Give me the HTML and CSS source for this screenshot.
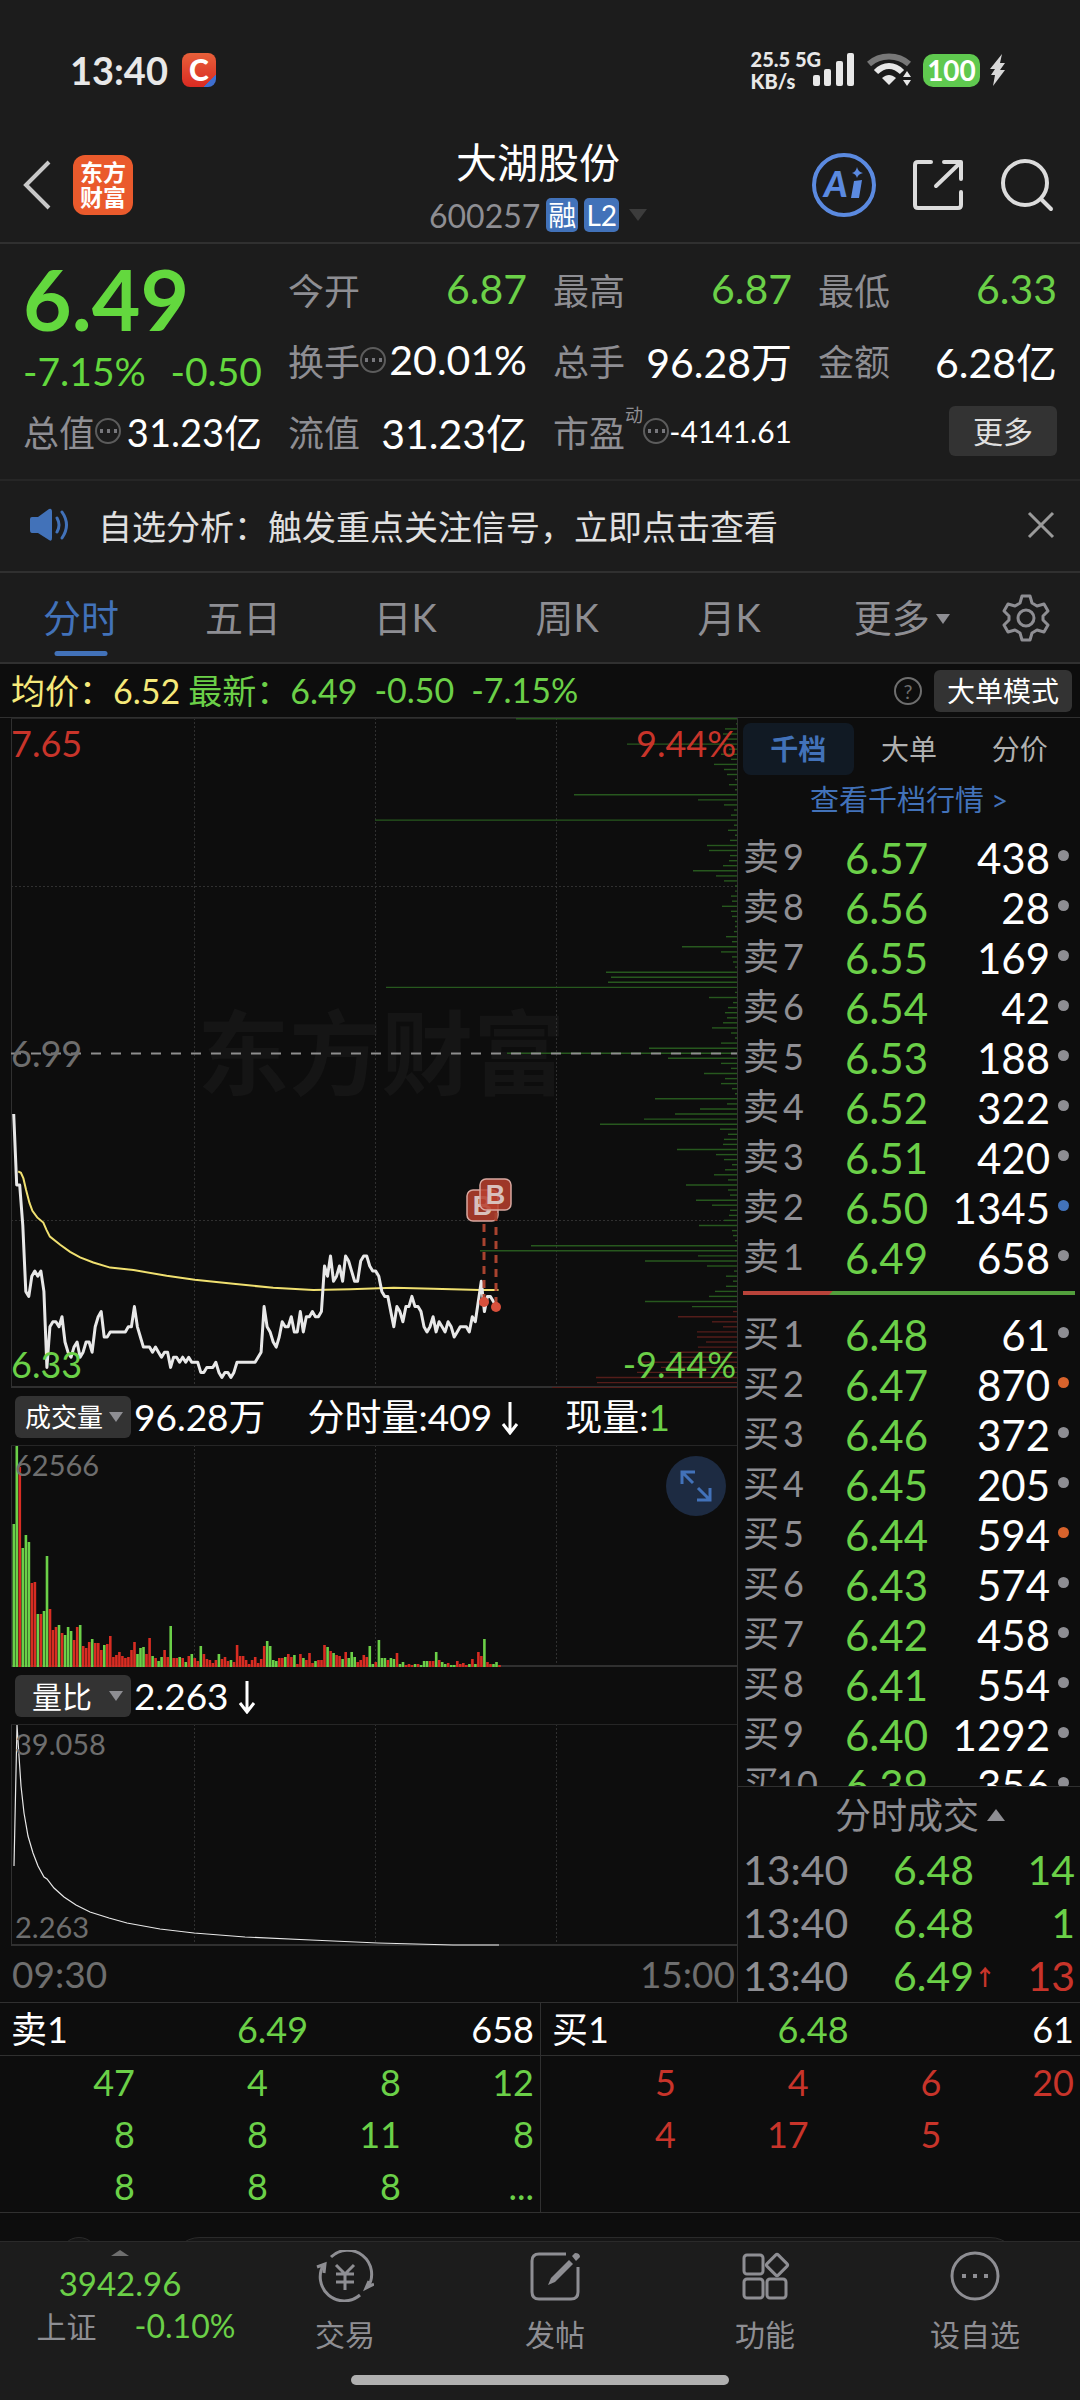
FILE: index.html
```html
<!DOCTYPE html>
<html lang="zh-CN">

<head>
  <meta charset="UTF-8" />
  <meta name="viewport" content="width=device-width, initial-scale=1.0" />
  <title>大湖股份 600257</title>
  <link rel="stylesheet" href="styles.css">
</head>

<body>
  <!-- Status bar -->
  <div class="status-bar">
    <span class="clock">13:40</span>
    <span class="app-badge">C</span>
    <div class="status-right">
      <div class="net-speed">25.5 5G<br>KB/s</div>
      <svg class="signal" width="42" height="34" viewBox="0 0 42 34" fill="#e8e8e8">
        <rect x="0" y="22" width="7" height="11" rx="2" />
        <rect x="11" y="16" width="7" height="17" rx="2" />
        <rect x="23" y="8" width="7" height="25" rx="2" />
        <rect x="34" y="0" width="7" height="33" rx="2" />
      </svg>
      <svg class="wifi" width="46" height="34" viewBox="0 0 46 34" fill="none">
        <path d="M2 11 C13 1 31 1 42 11" stroke="#777" stroke-width="6" />
        <path d="M9 19 C17 11 27 11 35 19" stroke="#e8e8e8" stroke-width="6" />
        <path d="M15 25 C20 21 24 21 29 25 L22 32 Z" fill="#e8e8e8" />
        <path d="M36 24 L40 18 L44 24 Z M36 27 L40 33 L44 27 Z" fill="#e8e8e8" />
      </svg>
      <span class="battery">100</span>
      <svg class="bolt" width="16" height="32" viewBox="0 0 16 32" fill="#d8d8d8">
        <path d="M12 0 L0 15 H5 L1 21 H5 L3 32 L15 16 H10 L15 9 H10 Z" />
      </svg>
    </div>
  </div>

  <!-- Header -->
  <header class="header">
    <div class="header-left">
      <a href="#" class="back" aria-label="返回">
        <svg width="30" height="50" viewBox="0 0 30 50" fill="none" stroke="#c8c8c8" stroke-width="4">
          <path d="M27 2 L4 25 L27 48" />
        </svg>
      </a>
      <span class="logo">东方<br>财富</span>
    </div>
    <div class="stock">
      <h1>大湖股份</h1>
      <div class="stock-code">
        <span>600257</span>
        <span class="tag">融</span>
        <span class="tag">L2</span>
        <span class="tri-down"></span>
      </div>
    </div>
    <div class="header-right">
      <button aria-label="AI">
        <svg width="64" height="64" viewBox="0 0 64 64">
          <circle cx="32" cy="32" r="30" fill="none" stroke="#5b8ae0" stroke-width="4" />
          <text class="ai-text" x="12" y="44">A</text>
          <path d="M42 28 L50 27 L47 45 L39 45 Z M45 14 Q46 19 51 20 Q46 21 45 25 Q44 21 40 20 Q44 19 45 14 Z" fill="#5b8ae0" />
        </svg>
      </button>
      <button aria-label="分享">
        <svg width="52" height="52" viewBox="0 0 52 52" fill="none" stroke="#dcdcdc" stroke-width="4" stroke-linecap="round" stroke-linejoin="round">
          <path d="M19 3 H6 Q3 3 3 6 V46 Q3 49 6 49 H46 Q49 49 49 46 V33" />
          <path d="M32 3 H49 V20 M48 4 L24 27" />
        </svg>
      </button>
      <button aria-label="搜索">
        <svg width="54" height="54" viewBox="0 0 54 54" fill="none" stroke="#dcdcdc" stroke-width="4" stroke-linecap="round">
          <circle cx="25" cy="25" r="22" />
          <path d="M41 41 L51 51" />
        </svg>
      </button>
    </div>
  </header>

  <!-- Quote summary -->
  <section class="quote">
    <div class="quote-main">
      <div class="last-price">6.49</div>
      <div class="last-change"><span>-7.15%</span><span>-0.50</span></div>
    </div>
    <div class="cell"><span class="label">今开</span><span class="value green">6.87</span></div>
    <div class="cell"><span class="label">最高</span><span class="value green">6.87</span></div>
    <div class="cell"><span class="label">最低</span><span class="value green">6.33</span></div>
    <div class="cell"><span class="label">换手<i class="dots"></i></span><span class="value">20.01%</span></div>
    <div class="cell"><span class="label">总手</span><span class="value">96.28万</span></div>
    <div class="cell"><span class="label">金额</span><span class="value">6.28亿</span></div>
    <div class="cell"><span class="label">总值<i class="dots"></i></span><span class="value mid">31.23亿</span></div>
    <div class="cell"><span class="label">流值</span><span class="value">31.23亿</span></div>
    <div class="cell"><span class="label">市盈<sup>动</sup><i class="dots"></i></span><span class="value small">-4141.61</span></div>
    <div class="cell end"><button class="more-btn">更多</button></div>
  </section>

  <!-- Notice -->
  <div class="notice">
    <svg width="40" height="34" viewBox="0 0 40 34" fill="#4272b9">
      <path d="M0 11 Q0 9 2 9 H8 L19 1 Q22 0 22 4 V30 Q22 34 19 32 L8 25 H2 Q0 25 0 22 Z" />
      <path d="M27 10 Q31 17 27 24 M32 4 Q41 17 32 30" fill="none" stroke="#4272b9" stroke-width="3" stroke-linecap="round" />
    </svg>
    <a href="#">自选分析：触发重点关注信号，立即点击查看</a>
    <button aria-label="关闭">
      <svg width="28" height="28" viewBox="0 0 28 28" stroke="#9a9a9a" stroke-width="3">
        <path d="M2 2 L26 26 M26 2 L2 26" />
      </svg>
    </button>
  </div>

  <!-- Period tabs -->
  <nav class="tabs">
    <button class="active">分时</button>
    <button>五日</button>
    <button>日K</button>
    <button>周K</button>
    <button>月K</button>
    <button>更多<span class="tri-down small"></span></button>
    <button class="gear" aria-label="设置">
      <svg width="48" height="48" viewBox="0 0 48 48" fill="none" stroke="#8e8e93" stroke-width="3" stroke-linejoin="round">
        <path d="M20 2 H28 L30 9 L35 12 L42 10 L46 17 L41 22 V26 L46 31 L42 38 L35 36 L30 39 L28 46 H20 L18 39 L13 36 L6 38 L2 31 L7 26 V22 L2 17 L6 10 L13 12 L18 9 Z" />
        <circle cx="24" cy="24" r="8" />
      </svg>
    </button>
  </nav>

  <!-- Average / latest line -->
  <div class="info-line">
    <span class="yellow">均价：6.52</span>
    <span class="green">最新：6.49</span>
    <span class="green">-0.50</span>
    <span class="green">-7.15%</span>
    <span class="help">?</span>
    <button class="mode-btn">大单模式</button>
  </div>

  <main class="board">
    <!-- Charts -->
    <div class="charts">
      <div class="pane">
        <span class="watermark">东方财富</span>
        <svg id="price-chart" viewBox="0 0 726 670"></svg>
        <span class="axis high left red">7.65</span>
        <span class="axis high right red">9.44%</span>
        <span class="axis middle left gray">6.99</span>
        <span class="axis low left green">6.33</span>
        <span class="axis low right green">-9.44%</span>
      </div>

      <div class="indicator">
        <button class="pick">成交量<span class="tri-down small"></span></button>
        <span class="total">96.28万</span>
        <span class="minute">分时量:409<svg class="arrow" width="18" height="34" viewBox="0 0 18 34"><path d="M9 1 V32 M2 23 L9 32 L16 23" /></svg></span>
        <span>现量:<b class="green">1</b></span>
      </div>
      <div class="pane">
        <svg id="volume-chart" viewBox="0 0 726 222"></svg>
        <span class="axis small high left gray">62566</span>
        <button class="expand" aria-label="全屏">
          <svg width="32" height="32" viewBox="0 0 32 32" fill="none" stroke="#4272b9" stroke-width="3">
            <path d="M2 14 V2 H15 M3 3 L13 13 M30 18 V30 H17 M29 29 L18 18" />
          </svg>
        </button>
      </div>

      <div class="indicator">
        <button class="pick wide">量比<span class="tri-down small"></span></button>
        <span>2.263<svg class="arrow" width="18" height="34" viewBox="0 0 18 34"><path d="M9 1 V32 M2 23 L9 32 L16 23" /></svg></span>
      </div>
      <div class="pane">
        <svg id="ratio-chart" viewBox="0 0 726 222"></svg>
        <span class="axis small high left gray">39.058</span>
        <span class="axis small low left gray">2.263</span>
      </div>
      <div class="time-axis"><span>09:30</span><span>15:00</span></div>
    </div>

    <!-- Order book -->
    <aside class="side">
      <div class="side-tabs">
        <button class="active">千档</button>
        <button>大单</button>
        <button>分价</button>
      </div>
      <a href="#" class="depth-link">查看千档行情 &gt;</a>
      <div class="book">
        <table id="asks"></table>
        <div class="ratio-bar"><span></span></div>
        <table id="bids"></table>
      </div>
      <div class="deals">
        <button class="deals-title">分时成交<span class="tri-up"></span></button>
        <table>
          <tr><td>13:40</td><td class="green">6.48</td><td class="green">14</td></tr>
          <tr><td>13:40</td><td class="green">6.48</td><td class="green">1</td></tr>
          <tr><td>13:40</td><td class="green">6.49<i class="up">↑</i></td><td class="red">13</td></tr>
        </table>
      </div>
    </aside>
  </main>

  <!-- Queue at best ask / bid -->
  <section class="queues">
    <div class="queue">
      <div class="queue-head"><span>卖1</span><span class="green">6.49</span><span>658</span></div>
      <table class="green">
        <tr><td>47</td><td>4</td><td>8</td><td>12</td></tr>
        <tr><td>8</td><td>8</td><td>11</td><td>8</td></tr>
        <tr><td>8</td><td>8</td><td>8</td><td>...</td></tr>
      </table>
    </div>
    <div class="queue">
      <div class="queue-head"><span>买1</span><span class="green">6.48</span><span>61</span></div>
      <table class="red">
        <tr><td>5</td><td>4</td><td>6</td><td>20</td></tr>
        <tr><td>4</td><td>17</td><td>5</td><td></td></tr>
      </table>
    </div>
  </section>

  <div class="peek">
    <span class="peek-avatar"></span>
    <span class="peek-box"></span>
  </div>

  <!-- Bottom bar -->
  <footer class="footer">
    <nav class="bottom-nav">
      <a href="#" class="index">
        <span class="tri-up dim"></span>
        <span class="index-value">3942.96</span>
        <span class="index-row"><span>上证</span><span class="green">-0.10%</span></span>
      </a>
      <a href="#">
        <svg width="58" height="52" viewBox="0 0 58 52" fill="none" stroke="#8e8e93" stroke-width="3">
          <path d="M15 7 A24 24 0 0 1 52 37 M44 45 A24 24 0 0 1 8 14 M1 17 L9 14 L8 23 M58 34 L50 38 L53 31" />
          <path d="M20 15 L29 24 L38 15 M29 24 V40 M20 24 H38 M20 32 H38" />
        </svg>
        交易
      </a>
      <a href="#">
        <svg width="50" height="52" viewBox="0 0 50 52" fill="none" stroke="#8e8e93" stroke-width="3">
          <path d="M36 4 H9 Q2 4 2 11 V42 Q2 49 9 49 H41 Q48 49 48 42 V17" />
          <path d="M39 10 L43 14 L25 32 L18 35 L21 28 Z M42 6 L45 3 Q50 3 50 7 L46 11 Z" fill="#8e8e93" stroke="none" />
        </svg>
        发帖
      </a>
      <a href="#">
        <svg width="50" height="52" viewBox="0 0 50 52" fill="none" stroke="#8e8e93" stroke-width="3">
          <rect x="4" y="5" width="19" height="19" rx="3" />
          <rect x="4" y="29" width="19" height="19" rx="3" />
          <rect x="27" y="29" width="19" height="19" rx="3" />
          <rect x="-8" y="-8" width="16" height="16" rx="2" transform="translate(37 15) rotate(45)" />
        </svg>
        功能
      </a>
      <a href="#">
        <svg width="50" height="52" viewBox="0 0 50 52" fill="none" stroke="#8e8e93" stroke-width="3">
          <circle cx="25" cy="26" r="23" />
          <path d="M12 26 H16 M23 26 H27 M34 26 H38" stroke-width="4" />
        </svg>
        设自选
      </a>
    </nav>
    <div class="home-bar"></div>
  </footer>

  <script src="script.js"></script>
</body>

</html>
```
FILE: styles.css
```css
/* General Styles */
* {
  box-sizing: border-box;
}

body {
  margin: 0;
  background-color: #0d0d0d;
  color: #fff;
  font-family: Lato, "Noto Sans CJK SC", sans-serif;
  font-size: 36px;
}

button {
  padding: 0;
  border: 0;
  background: none;
  color: inherit;
  font: inherit;
}

a {
  color: inherit;
  text-decoration: none;
}

svg {
  display: block;
}

i {
  font-style: normal;
}

table {
  width: 100%;
  border-collapse: collapse;
  table-layout: fixed;
}

td {
  padding: 0;
  text-align: right;
}

.green {
  color: #6bd048;
}

.red {
  color: #c8342a;
}

.yellow {
  color: #f5e97a;
}

.gray {
  color: #6e6e6e;
}

.tri-down {
  display: inline-block;
  border: 9px solid transparent;
  border-top: 12px solid #3c3c3c;
  border-bottom: 0;
}

.tri-down.small {
  border-width: 10px 7px 0;
  border-top-color: #8e8e93;
}

.tri-up {
  display: inline-block;
  border: 9px solid transparent;
  border-bottom: 12px solid #8e8e93;
  border-top: 0;
}

.tri-up.dim {
  border-width: 0 9px 6px;
  border-bottom-color: #6e6e6e;
}

/* Status Bar */
.status-bar {
  display: flex;
  align-items: center;
  height: 140px;
  padding: 0 74px 0 70px;
  background-color: #1c1c1c;
  color: #e8e8e8;
}

.clock {
  font-size: 38px;
  font-weight: bold;
}

.app-badge {
  width: 34px;
  height: 34px;
  margin-left: 14px;
  border-radius: 8px;
  background: linear-gradient(135deg, transparent 82%, #3f6fd0 82%), linear-gradient(#e8603a, #d92a22);
  color: #fff;
  font-size: 30px;
  font-weight: 900;
  line-height: 32px;
  text-align: center;
}

.status-right {
  display: flex;
  align-items: center;
  margin-left: auto;
}

.net-speed {
  font-size: 20px;
  font-weight: 900;
  line-height: 22px;
  white-space: nowrap;
}

.signal {
  margin-left: -8px;
}

.wifi {
  margin-left: 12px;
}

.battery {
  width: 57px;
  height: 33px;
  margin-left: 10px;
  border-radius: 10px;
  background-color: #5fc94f;
  color: #fff;
  font-size: 28px;
  font-weight: bold;
  line-height: 33px;
  text-align: center;
}

.bolt {
  margin-left: 10px;
}

/* Header */
.header {
  display: grid;
  grid-template-columns: 1fr auto 1fr;
  align-items: center;
  height: 104px;
  padding: 0 26px 0 22px;
  border-bottom: 2px solid #303030;
  background-color: #1c1c1c;
}

.header-left {
  display: flex;
  align-items: center;
  gap: 21px;
  padding-bottom: 12px;
}

.logo {
  width: 60px;
  height: 60px;
  padding-top: 5px;
  border-radius: 12px;
  background-color: #ea5a2c;
  font-size: 23px;
  font-weight: bold;
  line-height: 25px;
  text-align: center;
}

.stock h1 {
  margin: -4px 0 4px;
  font-size: 41px;
  font-weight: normal;
  line-height: 48px;
  text-align: center;
}

.stock-code {
  display: flex;
  align-items: center;
  gap: 6px;
  height: 48px;
  color: #8e8e93;
  font-size: 32px;
}

.tag {
  height: 34px;
  padding: 0 2px;
  border-radius: 5px;
  background-color: #4272b9;
  color: #fff;
  font-size: 28px;
  line-height: 34px;
}

.stock-code .tri-down {
  margin-left: 4px;
}

.header-right {
  display: flex;
  align-items: center;
  justify-content: flex-end;
  gap: 36px;
  padding-bottom: 12px;
}

.ai-text {
  fill: #5b8ae0;
  font-size: 36px;
  font-weight: 900;
  font-style: italic;
}

/* Quote Summary */
.quote {
  display: grid;
  grid-template-columns: repeat(4, 1fr);
  grid-auto-rows: 71px;
  column-gap: 26px;
  padding: 9px 23px 13px;
  border-bottom: 2px solid #262626;
  background-color: #1c1c1c;
}

.quote-main {
  grid-row: span 2;
  color: #63d83e;
}

.last-price {
  margin-top: 2px;
  font-size: 84px;
  font-weight: bold;
  line-height: 88px;
}

.last-change {
  display: flex;
  justify-content: space-between;
  font-size: 39px;
  line-height: 56px;
}

.cell {
  display: flex;
  align-items: center;
  justify-content: space-between;
  white-space: nowrap;
}

.cell.end {
  justify-content: flex-end;
}

.label {
  display: flex;
  align-items: center;
  color: #8e8e93;
}

.label sup {
  align-self: flex-start;
  font-size: 18px;
  line-height: 20px;
}

.dots {
  width: 26px;
  height: 26px;
  border: 2px solid #5c5c5c;
  border-radius: 50%;
  background: radial-gradient(circle, #77777c 2px, transparent 2px) 1px 0 / 7px 22px repeat-x;
}

.value {
  font-size: 41px;
}

.value.mid {
  font-size: 38px;
}

.value.small {
  font-size: 30px;
}

.more-btn {
  width: 108px;
  height: 50px;
  border-radius: 6px;
  background-color: #333;
  color: #e0e0e0;
  font-size: 30px;
  line-height: 48px;
}

/* Notice */
.notice {
  display: flex;
  align-items: center;
  height: 92px;
  padding: 0 25px 2px 30px;
  border-bottom: 2px solid #303030;
  background-color: #1c1c1c;
  color: #e0e0e0;
  font-size: 34px;
}

.notice a {
  flex: 1;
  margin-left: 28px;
}

/* Period Tabs */
.tabs {
  display: grid;
  grid-template-columns: repeat(5, 15fr) 17fr 8fr;
  height: 91px;
  border-bottom: 2px solid #303030;
  background-color: #1c1c1c;
  color: #8e8e93;
  font-size: 38px;
}

.tabs button {
  padding-bottom: 4px;
}

.tabs .active {
  position: relative;
  color: #4272b9;
}

.tabs .active::after {
  content: "";
  position: absolute;
  bottom: 6px;
  left: 50%;
  width: 53px;
  height: 5px;
  border-radius: 3px;
  background-color: #4272b9;
  transform: translateX(-50%);
}

.tabs .tri-down {
  margin: 0 0 8px 6px;
}

.tabs .gear {
  padding: 0 0 0 8px;
}

/* Info Line */
.info-line {
  display: flex;
  align-items: center;
  height: 54px;
  padding: 0 8px 0 11px;
  border-bottom: 1px solid #303030;
  font-size: 34px;
}

.info-line span {
  margin-right: 8px;
  padding-bottom: 2px;
  white-space: nowrap;
}

.info-line .green {
  margin-right: 17px;
}

.info-line .help {
  width: 28px;
  height: 28px;
  margin-left: auto;
  margin-right: 12px;
  border: 2px solid #6e6e6e;
  border-radius: 50%;
  color: #6e6e6e;
  font-size: 20px;
  line-height: 24px;
  text-align: center;
}

.mode-btn {
  width: 138px;
  height: 42px;
  border-radius: 6px;
  background-color: #333;
  font-size: 28px;
  line-height: 40px;
}

/* Charts */
.board {
  display: grid;
  grid-template-columns: 738fr 342fr;
}

.charts {
  min-width: 0;
  border-right: 1px solid #303030;
}

.pane {
  position: relative;
  margin-left: 11px;
}

.pane > svg {
  position: relative;
  width: 100%;
}

.watermark {
  position: absolute;
  top: 50%;
  left: 51%;
  color: #151515;
  font-size: 92px;
  font-weight: bold;
  line-height: 92px;
  white-space: nowrap;
  transform: translate(-50%, -50%);
}

.axis {
  position: absolute;
  font-size: 36px;
  line-height: 48px;
}

.axis.high {
  top: 1px;
}

.axis.middle {
  top: 50%;
  transform: translateY(-50%);
}

.axis.low {
  bottom: 0;
}

.axis.left {
  left: 0;
}

.axis.right {
  right: 1px;
}

.axis.small {
  left: 4px;
  font-size: 29px;
  line-height: 38px;
}

.expand {
  position: absolute;
  top: 11px;
  right: 11px;
  display: flex;
  align-items: center;
  justify-content: center;
  width: 60px;
  height: 60px;
  border-radius: 50%;
  background-color: #1d2b42;
}

.indicator {
  display: flex;
  align-items: center;
  height: 57px;
  padding-left: 15px;
  font-size: 37px;
  line-height: 54px;
  white-space: nowrap;
}

.indicator span {
  margin-right: 46px;
}

.indicator .total {
  margin-right: 42px;
}

.indicator b {
  font-weight: normal;
}

.indicator .pick {
  display: flex;
  align-items: center;
  justify-content: space-between;
  width: 116px;
  height: 42px;
  margin-right: 3px;
  padding: 0 8px 0 10px;
  border-radius: 6px;
  background-color: #333;
  font-size: 26px;
  line-height: 40px;
}

.indicator .pick.wide {
  padding-left: 17px;
  font-size: 30px;
}

.pick .tri-down {
  margin: 0;
}

.arrow {
  display: inline-block;
  margin-left: 9px;
  fill: none;
  stroke: #fff;
  stroke-width: 3px;
  vertical-align: -4px;
}

.time-axis {
  display: flex;
  justify-content: space-between;
  padding: 0 2px 0 12px;
  color: #6e6e6e;
  font-size: 37px;
  line-height: 55px;
}

/* Order Book */
.side-tabs {
  display: grid;
  grid-template-columns: repeat(3, 1fr);
  padding: 5px 5px 0;
  color: #b0b0b0;
  font-size: 28px;
  line-height: 52px;
}

.side-tabs .active {
  border-radius: 8px;
  background-color: #111a24;
  color: #4272b9;
  font-weight: bold;
}

.depth-link {
  display: block;
  height: 58px;
  color: #4272b9;
  font-size: 29px;
  line-height: 50px;
  text-align: center;
}

.book {
  max-height: 953px;
  overflow: hidden;
}

.book td {
  height: 50px;
  font-size: 42px;
  line-height: 50px;
}

.book td:first-child {
  width: 76px;
  padding: 0 0 4px 5px;
  color: #8e8e93;
  font-size: 36px;
  line-height: 46px;
  text-align: left;
  white-space: nowrap;
}

.book td:nth-child(2) {
  width: 114px;
}

.book td:last-child {
  width: 30px;
}

.lv {
  margin-left: 4px;
}

.lv.two {
  margin-left: -3px;
}

.dot {
  display: block;
  width: 11px;
  height: 11px;
  margin: 0 auto 6px 8px;
  border-radius: 50%;
  background-color: #8e8e93;
}

.dot.blue {
  background-color: #4272b9;
}

.dot.orange {
  background-color: #d8632c;
}

.ratio-bar {
  margin: 8px 5px 15px;
  background-color: #529f3c;
}

.ratio-bar span {
  display: block;
  width: 27%;
  height: 4px;
  background-color: #b8433a;
  clip-path: polygon(0 0, 100% 0, 96% 100%, 0 100%);
}

.deals {
  border-top: 1px solid #303030;
}

.deals-title {
  display: block;
  width: 100%;
  padding-left: 22px;
  color: #8e8e93;
  font-size: 36px;
  line-height: 56px;
}

.deals-title .tri-up {
  margin: 0 0 8px 8px;
}

.deals td {
  position: relative;
  padding-right: 5px;
  font-size: 41px;
  line-height: 53px;
}

.deals td:first-child {
  padding: 0 0 0 5px;
  color: #8e8e93;
  text-align: left;
}

.deals td:nth-child(2) {
  width: 130px;
  padding-right: 0;
}

.up {
  position: absolute;
  left: 100%;
  color: #c8342a;
  font-family: "Noto Sans CJK SC", sans-serif;
  font-size: 22px;
  font-weight: bold;
}

/* Queues */
.queues {
  display: grid;
  grid-template-columns: 1fr 1fr;
  border-top: 1px solid #303030;
  border-bottom: 1px solid #303030;
}

.queue + .queue {
  border-left: 1px solid #303030;
}

.queue-head {
  display: grid;
  grid-template-columns: 1fr 1fr 1fr;
  padding: 0 6px 0 11px;
  border-bottom: 1px solid #303030;
  line-height: 52px;
}

.queue-head span:nth-child(2) {
  text-align: center;
}

.queue-head span:last-child {
  text-align: right;
}

.queue td {
  height: 52px;
  padding-right: 6px;
  line-height: 52px;
}

.queue td:first-child {
  width: 141px;
}

/* Top edge of the comment box behind the bottom bar */
.peek {
  display: grid;
  grid-template-columns: 38px 1fr;
  gap: 72px;
  height: 28px;
  padding: 24px 60px 0;
  overflow: hidden;
}

.peek span {
  height: 60px;
  border: 1px solid #2a2a2a;
  border-radius: 30px;
  background-color: #151515;
}

/* Bottom Bar */
.footer {
  height: 162px;
  border-top: 1px solid #2a2a2a;
  background-color: #1c1c1c;
}

.bottom-nav {
  display: grid;
  grid-template-columns: 24fr repeat(4, 21fr);
  height: 133px;
  color: #8e8e93;
  font-size: 30px;
  line-height: 40px;
}

.bottom-nav a {
  display: flex;
  flex-direction: column;
  align-items: center;
  gap: 12px;
  padding-top: 8px;
}

.bottom-nav .index {
  gap: 0;
}

.index-value {
  margin-top: 7px;
  color: #6bd048;
  font-size: 33px;
}

.index-row {
  display: flex;
  gap: 38px;
  margin-top: 3px;
  padding-left: 32px;
}

.index-row .green {
  font-size: 32px;
}

.home-bar {
  width: 35%;
  height: 10px;
  margin: 0 auto;
  border-radius: 5px;
  background-color: #b0b0b0;
}
```
FILE: script.js
```js
const GREEN = "#6bd048";
const RED = "#d82c22";

// price per minute, in cents
const prices = [
  687, 673, 673, 665, 652, 651, 655, 656, 655, 656, 652, 637, 645, 646, 646, 645, 647, 642, 640, 639,
  641, 642, 639, 640, 642, 642, 640, 645, 647, 648, 643, 643, 644, 644, 644, 644, 644, 644, 645, 645,
  649, 645, 643, 641, 641, 641, 640, 641, 640, 639, 640, 640, 637, 639, 639, 638, 639, 638, 639, 638,
  638, 638, 636, 636, 637, 637, 637, 638, 636, 635, 636, 636, 635, 636, 638, 638, 638, 638, 638, 638,
  638, 639, 640, 649, 645, 644, 642, 641, 643, 646, 645, 645, 647, 644, 644, 648, 644, 647, 647, 648,
  647, 647, 648, 657, 655, 659, 654, 655, 657, 654, 659, 658, 656, 654, 654, 658, 659, 659, 657, 656,
  656, 655, 652, 651, 651, 648, 645, 649, 648, 646, 649, 649, 651, 649, 649, 648, 645, 644, 645, 647,
  644, 646, 645, 644, 646, 645, 643, 644, 645, 645, 645, 644, 647, 646, 650, 654, 648, 651, 651, 650, 649
];

// [minute, average price in cents]
const average = [
  [1.5, 675.7], [2.4, 675.4], [3.2, 674.3], [4.1, 672], [5.2, 669.5], [6.2, 667.9], [7.8, 666.6],
  [9.8, 665.6], [10.9, 664.1], [12, 662.8], [15.4, 661.2], [18.7, 659.8], [22, 658.7], [26.4, 657.7],
  [32, 656.7], [39.7, 656.2], [50.7, 655.1], [60, 654.3], [72.8, 653.5], [86, 652.7], [99.3, 652.3],
  [111.5, 652.4], [126, 652.7], [139, 652.5], [154.6, 652.3], [160.7, 652.3]
];

// resting orders per cent, 7.65 down to 6.33
const depth = [
  221, 1, 12, 14, 10, 110, 8, 16, 6, 23, 13, 10, 2, 8, 2, 163, 39, 13, 3, 6,
  362, 3, 9, 2, 7, 30, 28, 7, 8, 14, 44, 21, 13, 2, 2, 6, 5, 15, 6, 5,
  2, 2, 3, 11, 5, 55, 16, 5, 4, 2, 131, 126, 129, 351, 2, 28, 4, 9, 12, 10,
  14, 25, 6, 2, 16, 88, 230, 69, 16, 6, 33, 12, 16, 5, 2, 82, 10, 37, 62, 93,
  137, 17, 9, 13, 14, 60, 21, 13, 5, 12, 23, 9, 51, 9, 7, 41, 25, 7, 8, 13,
  38, 5, 4, 2, 206, 257, 39, 92, 30, 3, 11, 4, 11, 22, 28, 92, 45, 4, 59, 25,
  14, 40, 40, 31, 39, 67, 57, 100, 76, 100, 141, 140, 185
];

// g = falling minute, r = rising minute
const volumes = (
  "g143 g221 r200 g119 g132 g125 r84 r85 g53 r53 g56 g111 r58 r37 r40 g42 r34 g32 g40 g36 " +
  "r27 r40 g42 r21 r19 r25 g28 r24 r24 r17 g22 r23 r31 r10 r12 r15 r11 r9 r10 r17 " +
  "r25 g13 g19 g20 r13 r29 g11 r9 g6 g10 r17 r10 g41 r9 r9 g10 r9 g5 r11 g13 " +
  "r9 r6 g21 r13 r8 r7 r4 r7 g13 r8 r10 r6 g7 r5 r22 r11 r11 r7 r3 r7 " +
  "r10 r4 r8 r21 g26 g21 g7 g6 r9 r9 g10 r13 r10 g12 r3 r13 g9 r7 r14 r4 " +
  "g6 r7 r7 r22 g20 r16 g14 r12 r11 g8 r15 g9 g15 g10 r5 r7 r12 r10 g21 g3 " +
  "r5 g27 g9 g9 r7 g9 g8 r14 g3 g5 r2 r3 r2 g3 r3 g2 g6 g6 r6 r6 " +
  "g15 r7 g5 g3 r4 g2 g2 r6 r3 r4 r2 g3 r8 g3 r15 r11 g28 r5 r3 g3 g5 r2"
).split(" ");

const ratio = "3,142 6,1 8,32 10,62 13,89 17,112 22,129 27,142 33,153 36,155 43,164 53,173 65,181 " +
  "79,188 98,194 116,199 149,205 183,209 234,213 300,216 367,219 442,221 488,221";

const timeX = (m) => (2.7 + m * 3.017).toFixed(1);
const priceY = (c) => (0.8 + (765 - c) * 5.067).toFixed(1);

function line(x1, y1, x2, y2, color, extra = "") {
  return `<line x1="${x1}" y1="${y1}" x2="${x2}" y2="${y2}" stroke="${color}" ${extra}/>`;
}

function grid(height) {
  let s = "";
  for (const x of [183.5, 364.5, 545.5]) {
    s += line(x, 0, x, height, "#303030", 'stroke-dasharray="2 2"');
  }
  s += line(0.5, 0, 0.5, height, "#303030");
  s += line(0, 0.5, 726, 0.5, "#262626");
  s += line(0, height - 1, 726, height - 1, "#303030", 'stroke-width="2"');
  return s;
}

function buyMark(x, y, lineX, dotY) {
  return line(lineX, y + 34, lineX, dotY, "#a8432f", 'stroke-width="3" stroke-dasharray="8 6"') +
    `<circle cx="${lineX}" cy="${dotY}" r="5" fill="#d8503c"/>` +
    `<rect x="${x}" y="${y}" width="31" height="31" rx="6" fill="#b8402e" fill-opacity="0.85" stroke="#d8a8a0" stroke-width="1.5"/>` +
    `<text x="${x + 15.5}" y="${y + 25}" text-anchor="middle" font-family="Liberation Sans" font-weight="bold" font-size="27" fill="#d8c0bc">B</text>`;
}

// Price chart
let s = grid(670);
s += line(0, 168.5, 726, 168.5, "#303030", 'stroke-dasharray="2 2"');
s += line(0, 502.5, 726, 502.5, "#303030", 'stroke-dasharray="2 2"');
depth.forEach((len, i) => {
  const y = priceY(765 - i);
  s += line(726 - len, y, 726, y, i < 117 ? "#27581e" : "#541d1a", 'stroke-width="1.4"');
});
s += line(0, 335.5, 726, 335.5, "#8e8e8e", 'stroke-width="2" stroke-dasharray="10 10"');
s += `<polyline fill="none" stroke="#f0e070" stroke-width="2" points="${average.map(([m, c]) => timeX(m) + "," + priceY(c)).join(" ")}"/>`;
s += `<polyline fill="none" stroke="#e8e8e8" stroke-width="3" stroke-linejoin="round" points="${prices.map((c, m) => timeX(m) + "," + priceY(c)).join(" ")}"/>`;
s += buyMark(456, 472, 473, 584) + buyMark(469, 461, 485, 589);
document.getElementById("price-chart").innerHTML = s;

// Volume chart
s = grid(222);
volumes.forEach((v, m) => {
  const h = Number(v.slice(1));
  s += `<rect x="${timeX(m - 0.4)}" y="${222 - h}" width="2.6" height="${h}" fill="${v[0] === "g" ? GREEN : RED}"/>`;
});
document.getElementById("volume-chart").innerHTML = s;

// Volume ratio chart
document.getElementById("ratio-chart").innerHTML =
  grid(222) + `<polyline fill="none" stroke="#e8e8e8" stroke-width="1.2" points="${ratio}"/>`;

// Order book
const asks = [
  [9, "6.57", 438], [8, "6.56", 28], [7, "6.55", 169], [6, "6.54", 42], [5, "6.53", 188],
  [4, "6.52", 322], [3, "6.51", 420], [2, "6.50", 1345, "blue"], [1, "6.49", 658]
];
const bids = [
  [1, "6.48", 61], [2, "6.47", 870, "orange"], [3, "6.46", 372], [4, "6.45", 205], [5, "6.44", 594, "orange"],
  [6, "6.43", 574], [7, "6.42", 458], [8, "6.41", 554], [9, "6.40", 1292], [10, "6.39", 356]
];

function bookRows(side, rows) {
  return rows.map(([lv, price, vol, dot = ""]) =>
    `<tr><td>${side}<span class="lv ${lv > 9 ? "two" : ""}">${lv}</span></td>` +
    `<td class="green">${price}</td><td>${vol}</td><td><i class="dot ${dot}"></i></td></tr>`
  ).join("");
}

document.getElementById("asks").innerHTML = bookRows("卖", asks);
document.getElementById("bids").innerHTML = bookRows("买", bids);
```
